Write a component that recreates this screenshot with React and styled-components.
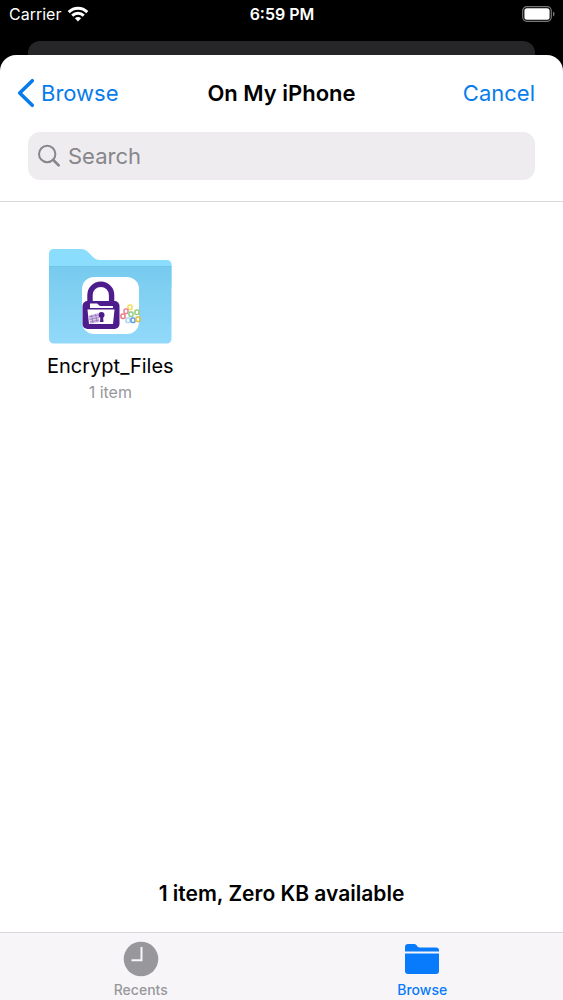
import React from "react";
import styled, { createGlobalStyle } from "styled-components";

const GlobalStyle = createGlobalStyle`
  *, *::before, *::after { box-sizing: border-box; }
  body {
    margin: 0;
    background: #000;
    font-family: Inter, "Liberation Sans", sans-serif;
    color: #000;
  }
  button, input { font: inherit; }
`;

const Screen = styled.div`
  display: flex;
  flex-direction: column;
  min-height: 100vh;
  background: #000;
`;

const StatusBar = styled.header`
  display: grid;
  grid-template-columns: 1fr auto 1fr;
  align-items: center;
  height: 28px;
  padding: 0 8px 0 9px;
  color: #fff;
  font-size: 16px;
  line-height: 20px;
`;

const Carrier = styled.div`
  display: flex;
  align-items: center;
  gap: 6px;
`;

const Clock = styled.time`
  font-weight: 600;
`;

const BatteryIcon = styled.svg`
  justify-self: end;
`;

const BackSheet = styled.div`
  height: 14px;
  margin: 13px 28px 0;
  border-radius: 12px 12px 0 0;
  background: #262528;
`;

const Sheet = styled.div`
  flex: 1;
  display: flex;
  flex-direction: column;
  overflow: hidden;
  border-radius: 16px 16px 0 0;
  background: #fff;
`;

const SheetHeader = styled.div`
  padding: 0 28px 21px;
  border-bottom: 1px solid #d9d8da;
`;

const NavBar = styled.div`
  display: grid;
  grid-template-columns: 1fr auto 1fr;
  align-items: center;
  height: 77px;
  padding-bottom: 1px;
`;

const NavButton = styled.button`
  display: flex;
  align-items: center;
  gap: 6px;
  justify-self: ${(p) => (p.$side === "end" ? "end" : "start")};
  margin-left: ${(p) => (p.$side === "end" ? "0" : "-11px")};
  padding: 0;
  border: 0;
  background: none;
  color: #087cea;
  font-size: 22px;
  line-height: 28px;
  cursor: pointer;
`;

const Title = styled.h1`
  margin: 0;
  font-size: 22px;
  line-height: 28px;
  font-weight: 600;
`;

const SearchField = styled.label`
  display: flex;
  align-items: center;
  gap: 7px;
  height: 48px;
  padding: 0 10px;
  border-radius: 12px;
  background: #eeecef;
  color: #87868a;
`;

const SearchInput = styled.input`
  flex: 1;
  min-width: 0;
  padding: 0;
  border: 0;
  outline: 0;
  background: none;
  color: #000;
  font-size: 22px;
  line-height: 28px;
  appearance: none;
  &::placeholder { color: #87868a; opacity: 1; }
`;

const Files = styled.main`
  flex: 1;
  display: flex;
  flex-wrap: wrap;
  align-content: flex-start;
  gap: 32px;
  padding: 46px 47px;
`;

const FolderItem = styled.button`
  display: flex;
  flex-direction: column;
  align-items: center;
  padding: 0;
  border: 0;
  background: none;
  color: #000;
  cursor: pointer;
`;

const FolderName = styled.span`
  margin-top: 8px;
  font-size: 20px;
  line-height: 28px;
`;

const FolderMeta = styled.span`
  color: #98979b;
  font-size: 16px;
  line-height: 24px;
`;

const Summary = styled.p`
  margin: 0;
  padding-bottom: 24px;
  text-align: center;
  font-size: 21px;
  line-height: 28px;
  font-weight: 600;
`;

const TabBar = styled.nav`
  display: flex;
  height: 68px;
  border-top: 1px solid #d9d8db;
  background: #f7f5f8;
`;

const Tab = styled.button`
  flex: 1;
  display: flex;
  flex-direction: column;
  align-items: center;
  gap: 4px;
  padding: 8px 0 0;
  border: 0;
  background: none;
  color: ${(p) => (p.$active ? "#077bfb" : "#98979b")};
  font-size: 14px;
  line-height: 18px;
  font-weight: 500;
  cursor: pointer;
`;

const Wifi = () => (
  <svg width="22" height="16" viewBox="0 0 22 16" fill="none" stroke="#fff" strokeWidth="2.9" aria-hidden="true">
    <path d="M1.7 6.1C7 .9 15 .9 20.3 6.1" />
    <path d="M5.2 9.6c3.3-3.1 8.3-3.1 11.6 0" />
    <path d="M11 15.5 7.9 12.3c1.7-1.6 4.5-1.6 6.2 0Z" fill="#fff" stroke="none" />
  </svg>
);

const Battery = () => (
  <BatteryIcon width="33" height="16" viewBox="0 0 33 16" aria-label="Battery full" role="img">
    <rect x=".7" y=".7" width="28.6" height="14.6" rx="4.2" fill="none" stroke="#77767a" strokeWidth="1.2" />
    <rect x="2.4" y="2.3" width="25.2" height="11.4" rx="2.5" fill="#fff" />
    <path d="M31 5.5c2 .8 2 4.2 0 5Z" fill="#77767a" />
  </BatteryIcon>
);

const Chevron = () => (
  <svg width="18" height="30" viewBox="0 0 18 30" fill="none" stroke="currentColor" strokeWidth="3.6" strokeLinecap="round" strokeLinejoin="round" aria-hidden="true">
    <path d="M15.3 2.7 2.7 15l12.6 12.3" />
  </svg>
);

const Magnifier = () => (
  <svg width="23" height="24" viewBox="0 0 23 24" fill="none" stroke="currentColor" aria-hidden="true">
    <circle cx="9.2" cy="10" r="8.2" strokeWidth="2" />
    <path d="m15.3 16 5.4 5.4" strokeWidth="2.7" strokeLinecap="round" />
  </svg>
);

const BITS = [
  [86, 58, "#f1dc5c"], [82, 62, "#ed8696"], [79, 67, "#e77b86"],
  [87, 65, "#8ccf8b"], [93, 63, "#9bcf73"],
  [84, 71, "#a9d4f2"], [89, 71, "#5c9ee0"], [94, 70, "#e5bd3f"],
];

const FolderArt = () => (
  <svg width="124" height="96" viewBox="0 0 124 96" aria-hidden="true">
    <defs>
      <linearGradient id="folderFace" x1="0" y1="0" x2="0" y2="1">
        <stop offset="0" stopColor="#77cbee" />
        <stop offset="1" stopColor="#92d9fa" />
      </linearGradient>
    </defs>
    <path d="M1 5.5a4.5 4.500 0 0 1 4.500-4.500H33c3 0 5 1 7 3l5 5c2 2 4 3 7 3h67a4.500 4.500 0 0 1 4.500 4.500V40H1Z" fill="#8bddfd" />
    <path d="M1 18.500h122.500V91a4.500 4.500 0 0 1-4.500 4.500H5.500A4.500 4.500 0 0 1 1 91Z" fill="url(#folderFace)" />
    <path d="M1 18.500h122.500" stroke="#70c5e8" />
    <rect x="34" y="29" width="57" height="57" rx="12" fill="#fff" />
    <path d="M42 56V47a10.800 10.800 0 0 1 21.600 0V56" fill="none" stroke="#4d1d8d" strokeWidth="5.400" />
    <rect x="34.500" y="53" width="37" height="28" rx="5" fill="#4d1d8d" />
    <path d="M42 60v-4.500h7l3 2.500h13v2Z" fill="#fff" />
    <path d="M39.500 61.500h27l-1.500 14.500H41Z" fill="#fff" />
    <path d="M40.500 67.500 50 65l2 9-10 2Z" fill="#d9c8eb" />
    <path d="m41 69 9-2M41.500 71.500l9-2M42 74l9-2M43.500 67l1.500 8M47.500 66l1.500 8" stroke="#9371b8" strokeWidth=".8" />
    <circle cx="53.500" cy="67" r="3" fill="#4d1d8d" />
    <path d="M52.500 68H55l.5 6h-3.500Z" fill="#4d1d8d" />
    <g transform="translate(-4 1)" fill="none" strokeWidth="1.600">
      {BITS.map(([x, y, color]) => (
        <rect key={`${x}-${y}`} x={x - 2} y={y - 2} width="4" height="4.500" rx="1.500" stroke={color} />
      ))}
    </g>
  </svg>
);

const RecentsIcon = () => (
  <svg width="36" height="36" viewBox="0 0 36 36" aria-hidden="true">
    <circle cx="18" cy="18" r="17.300" fill="#98979b" />
    <path d="M18.500 6v13.300H8.500" fill="none" stroke="#f7f6f9" strokeWidth="2" />
  </svg>
);

const BrowseIcon = () => (
  <svg width="36" height="36" viewBox="0 0 36 36" fill="#077bfb" aria-hidden="true">
    <path d="M1 10.500V6c0-2 1-3 3-3h6.500c2 0 2.800 3.500 5 3.500H32c2 0 3 1 3 3v1Z" />
    <path d="M1 12.500h34V30c0 2-1 3-3 3H4c-2 0-3-1-3-3Z" />
  </svg>
);

export default function App() {
  return (
    <Screen>
      <GlobalStyle />
      <StatusBar>
        <Carrier>
          Carrier
          <Wifi />
        </Carrier>
        <Clock>6:59 PM</Clock>
        <Battery />
      </StatusBar>
      <BackSheet />
      <Sheet>
        <SheetHeader>
          <NavBar>
            <NavButton type="button" $side="start">
              <Chevron />
              Browse
            </NavButton>
            <Title>On My iPhone</Title>
            <NavButton type="button" $side="end">Cancel</NavButton>
          </NavBar>
          <SearchField>
            <Magnifier />
            <SearchInput type="search" placeholder="Search" aria-label="Search" />
          </SearchField>
        </SheetHeader>
        <Files>
          <FolderItem type="button">
            <FolderArt />
            <FolderName>Encrypt_Files</FolderName>
            <FolderMeta>1 item</FolderMeta>
          </FolderItem>
        </Files>
        <Summary>1 item, Zero KB available</Summary>
        <TabBar>
          <Tab type="button">
            <RecentsIcon />
            Recents
          </Tab>
          <Tab type="button" $active aria-current="page">
            <BrowseIcon />
            Browse
          </Tab>
        </TabBar>
      </Sheet>
    </Screen>
  );
}
